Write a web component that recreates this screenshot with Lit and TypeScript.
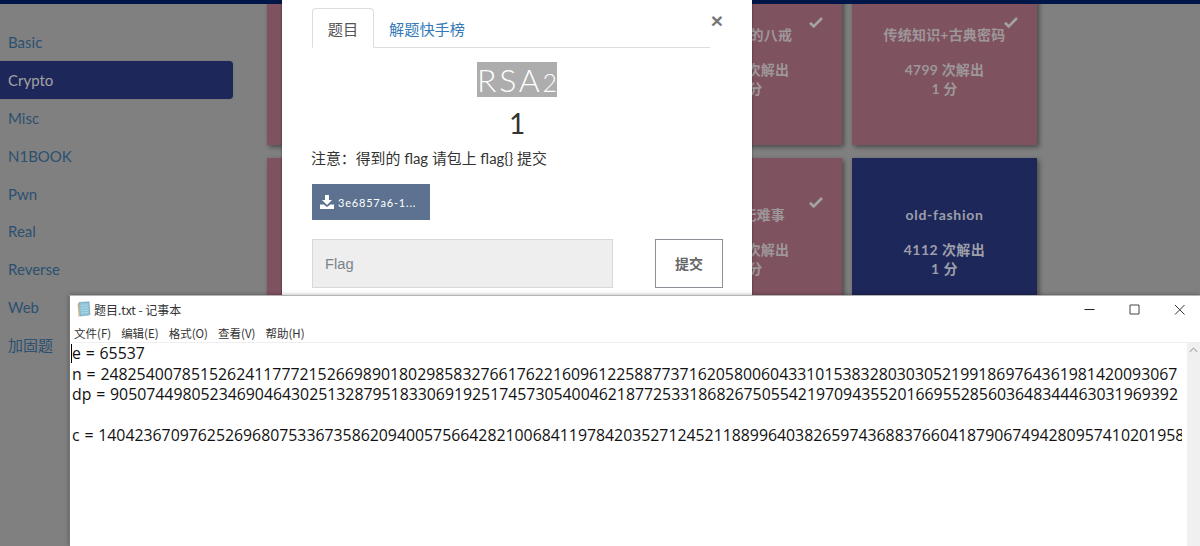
import { LitElement, html, css, svg } from "lit";
import { customElement } from "lit/decorators.js";

const NAV = ["Basic", "Crypto", "Misc", "N1BOOK", "Pwn", "Real", "Reverse", "Web", "加固题"];
const CARDS = [
  { title: "", count: "", score: "", solved: true },
  { title: "", count: "", score: "", solved: true },
  { title: "萌萌哒的八戒", count: "4889", score: "1", solved: true },
  { title: "传统知识+古典密码", count: "4799", score: "1", solved: true },
  { title: "", count: "", score: "", solved: true },
  { title: "", count: "", score: "", solved: true },
  { title: "世上无难事", count: "4512", score: "1", solved: true },
  { title: "old-fashion", count: "4112", score: "1", solved: false },
];
const LINES = [
  "e = 65537",
  "n = 24825400785152624117772152669890180298583276617622160961225887737162058006043310153832803030521991869764361981420093067",
  "dp = 9050744980523469046430251328795183306919251745730540046218772533186826750554219709435520166955285603648344463031969392",
  "",
  "c = 14042367097625269680753367358620940057566428210068411978420352712452118899640382659743688376604187906749428095741020195812",
];

const check = svg`<path d="M1 6.800 4.700 10.400 13 2" fill="none" stroke="currentColor" stroke-width="2.600"/>`;

@customElement("app-root")
export class AppRoot extends LitElement {
  static styles = css`
    :host { display: block; width: 1200px; height: 546px; overflow: hidden; position: relative; background: #808080; font-family: Lato, "Noto Sans CJK SC", sans-serif; }
    .topbar { height: 4px; background: #011648; }
    .main { display: flex; height: 542px; overflow: hidden; }
    .side { width: 233px; flex: none; margin-right: 34px; padding-top: 19px; }
    .nav { height: 37.9px; display: flex; align-items: center; padding-left: 8px; font-size: 15px; line-height: 20px; color: #2c5070; border-radius: 0 4px 4px 0; }
    .nav.on { background: #1e2759; color: #a3a3a3; box-shadow: 0 0 1px #555; }
    .grid { display: grid; grid-template-columns: repeat(4, 185px); grid-auto-rows: 167px; gap: 13px 10px; margin-top: -26px; align-content: start; }
    .card { position: relative; background: #7f5260; color: #9d9799; box-shadow: 2px 2px 5px rgba(0,0,0,.45); text-align: center; font-weight: 700; font-size: 14px; line-height: 19px; padding-top: 47px; box-sizing: border-box; letter-spacing: .2px; }
    .card.todo { background: #1e2759; color: #9c9eaa; letter-spacing: .45px; }
    .card.todo .title { letter-spacing: .7px; }
    .tick { position: absolute; top: 38px; right: 19px; width: 14px; height: 13px; color: #a3a3a3; }
    .title { height: 19px; margin-bottom: 16px; white-space: nowrap; }

    .modal { position: absolute; left: 282px; top: 0; width: 470px; height: 320px; box-sizing: border-box; background: #fff; padding: 8px 29px; box-shadow: 0 0 2px rgba(0,0,0,.5); color: #333; }
    .tabs { display: flex; width: 398px; height: 39px; margin-left: 1px; border-bottom: 1px solid #ddd; font-size: 15.2px; }
    .tab { height: 40px; display: flex; align-items: center; padding: 0 15px; box-sizing: border-box; color: #337ab7; }
    .tab.on { width: 62px; padding: 0; justify-content: center; color: #555; background: #fff; border: 1px solid #ddd; border-bottom-color: #fff; border-radius: 4px 4px 0 0; }
    .close { position: absolute; top: 10px; right: 29px; font-size: 21px; line-height: 22px; font-weight: 700; color: #777; font-family: "Liberation Sans", sans-serif; }
    .h { text-align: center; margin-top: 15px; height: 35px; line-height: 35px; display: flex; justify-content: center; }
    .h span.t { background: #adadad; color: #fff; font-size: 32px; line-height: 35px; font-weight: 300; letter-spacing: 2.8px; margin-top: -1px; height: 35px; }
    .h span.o { font-size: 25px; letter-spacing: 0; }
    .score { text-align: center; font-size: 28px; line-height: 34px; margin-top: 8px; color: #333; }
    .note { margin-top: 8px; font-size: 14.9px; line-height: 20px; height: 20px; white-space: nowrap; color: #333; }
    .dl { margin-top: 16px; width: 118px; height: 36px; margin-left: 1px; background: #5c7290; color: #fff; display: flex; align-items: center; padding-left: 8px; gap: 4px; box-sizing: border-box; font-size: 11px; letter-spacing: .8px; }
    .dl svg { width: 14px; height: 14px; flex: none; }
    .row { margin-top: 19px; display: flex; justify-content: space-between; margin-left: 1px; width: 411px; }
    .input { width: 301px; height: 49px; box-sizing: border-box; background: #eee; border: 1px solid #d5d9de; color: #7d8389; font: 14.7px "Liberation Sans", sans-serif; display: flex; align-items: center; padding-left: 12px; }
    .submit { width: 68px; height: 49px; box-sizing: border-box; background: #fff; border: 1px solid #8b8f96; color: #666; font-size: 14px; font-weight: 700; display: flex; align-items: center; justify-content: center; padding-bottom: 1px; }

    .note-win { position: absolute; left: 69px; top: 295px; right: 0; bottom: 0; background: #fff; border-top: 1px solid #b4b4b4; border-left: 1px solid #777; box-shadow: 0 0 4px rgba(0,0,0,.35); display: flex; flex-direction: column; color: #000; font-family: "Noto Sans CJK SC", sans-serif; }
    .cap { height: 29px; flex: none; display: flex; align-items: center; padding: 0 0 2px 6px; box-sizing: border-box; gap: 3px; font-size: 12px; color: #333; }
    .cap svg.ic { width: 15px; height: 17px; flex: none; }
    .ctl { margin-left: auto; display: flex; height: 29px; align-items: center; }
    .ctl svg { width: 45px; height: 29px; }
    .menu { height: 17px; flex: none; display: flex; gap: 10px; padding-left: 4px; font-size: 11.5px; line-height: 17px; color: #333; border-bottom: 1px solid #efefef; }
    .body { flex: 1; min-height: 0; display: flex; }
    .txt { flex: 1; min-width: 0; position: relative; overflow: hidden; margin-right: 5px; padding: 0 0 0 2px; font: 15.84px/20.5px "Open Sans", "Noto Sans", sans-serif; word-spacing: .7px; color: #111; }
    .line { height: 20.5px; white-space: pre; }
    .caret { position: absolute; left: 1px; top: 1px; width: 1px; height: 19px; background: #000; }
    .sb { width: 13px; flex: none; background: #f0f0f0; display: flex; justify-content: center; padding-top: 4px; box-sizing: border-box; }
    .sb svg { width: 9px; height: 6px; }
  `;

  render() {
    return html`
      <div class="topbar"></div>
      <div class="main">
        <nav class="side">
          ${NAV.map((n) => html`<div class="nav ${n === "Crypto" ? "on" : ""}">${n}</div>`)}
        </nav>
        <div class="grid">
          ${CARDS.map(
            (c) => html`<div class="card ${c.solved ? "" : "todo"}">
              ${c.solved ? html`<svg class="tick" viewBox="0 0 14 13">${check}</svg>` : ""}
              ${c.title
                ? html`<div class="title">${c.title}</div>
                    <div>${c.count} 次解出</div>
                    <div>${c.score} 分</div>`
                : ""}
            </div>`
          )}
        </div>
      </div>

      <div class="modal">
        <div class="tabs">
          <div class="tab on">题目</div>
          <div class="tab">解题快手榜</div>
        </div>
        <div class="close">×</div>
        <div class="h"><span class="t">RSA<span class="o">2</span></span></div>
        <div class="score">1</div>
        <div class="note">注意：得到的 flag 请包上 flag{} 提交</div>
        <div class="dl">
          <svg viewBox="0 0 14 14" fill="#fff"><path d="M5 0h4v5h3L7 10 2 5h3zM0 9.500h3.600L7 12l3.400-2.500H14V14H0z"/></svg>
          <span>3e6857a6-1...</span>
        </div>
        <div class="row">
          <div class="input">Flag</div>
          <div class="submit">提交</div>
        </div>
      </div>

      <div class="note-win">
        <div class="cap">
          <svg class="ic" viewBox="0 0 15 17">
            <path d="M3 1.500 13 .8l1 13-10 1.200z" fill="#8cc4d8" stroke="#6a94a6" stroke-width=".6"/>
            <path d="M1.600 3 3 1.500 4 15l-1.400 1z" fill="#c9b68e"/>
            <path d="M5 4.500l7-.5M5 7l7-.5M5 9.500l7-.5M5 12l7-.5" stroke="#b8dbe6" stroke-width=".8"/>
          </svg>
          <span>题目.txt - 记事本</span>
          <div class="ctl">
            <svg viewBox="0 0 45 29"><path d="M19.500 14.500h10" stroke="#222"/></svg>
            <svg viewBox="0 0 45 29"><path d="M20 10h9v9h-9z" fill="none" stroke="#444"/></svg>
            <svg viewBox="0 0 45 29"><path d="M20 10l9.500 9.500M29.500 10 20 19.500" fill="none" stroke="#333"/></svg>
          </div>
        </div>
        <div class="menu">
          <span>文件(F)</span><span>编辑(E)</span><span>格式(O)</span><span>查看(V)</span><span>帮助(H)</span>
        </div>
        <div class="body">
          <div class="txt">
            <span class="caret"></span>
            ${LINES.map((l) => html`<div class="line">${l}</div>`)}
          </div>
          <div class="sb"><svg viewBox="0 0 9 6"><path d="M.8 5 4.500 1.200 8.200 5" fill="none" stroke="#b5b5b5" stroke-width="1.200"/></svg></div>
        </div>
      </div>
    `;
  }
}
